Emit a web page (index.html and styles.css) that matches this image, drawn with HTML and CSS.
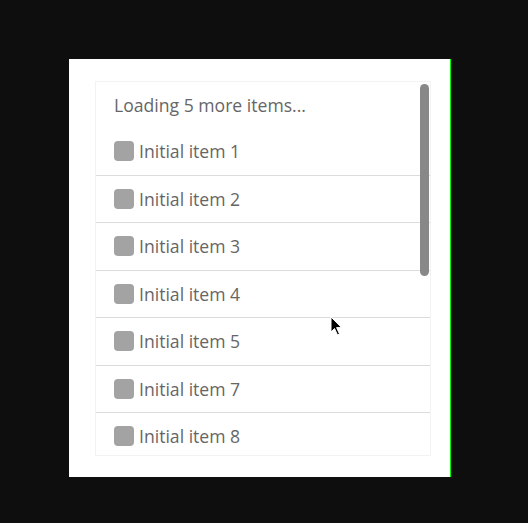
FILE: index.html
```html
<!DOCTYPE html>
<html>
<head>
<meta charset="utf-8">
<link rel="stylesheet" href="styles.css">
</head>
<body>
<div class="panel">
  <div class="list">
    <div class="loading">Loading 5 more items...</div>
    <div class="item"><span class="box"></span><span>Initial item 1</span></div>
    <div class="item"><span class="box"></span><span>Initial item 2</span></div>
    <div class="item"><span class="box"></span><span>Initial item 3</span></div>
    <div class="item"><span class="box"></span><span>Initial item 4</span></div>
    <div class="item"><span class="box"></span><span>Initial item 5</span></div>
    <div class="item"><span class="box"></span><span>Initial item 7</span></div>
    <div class="item last"><span class="box"></span><span>Initial item 8</span></div>
    <div class="thumb"></div>
  </div>
</div>
<svg class="cursor" width="14" height="22" viewBox="0 0 14 22"><path d="M1 1 L1 16 L4.5 12.5 L7.5 19 L9.5 18 L6.6 11.6 L11.5 11.6 Z" fill="#000" stroke="#fff" stroke-width="1"/></svg>
</body>
</html>
```
FILE: styles.css
```css
html, body {
  margin: 0;
  padding: 0;
  background: #0e0e0e;
  height: 100%;
}
body {
  position: relative;
  padding-top: 59px;
  padding-left: 69px;
  box-sizing: border-box;
  font-family: "Open Sans", "Noto Sans", sans-serif;
}
.panel {
  width: 382px;
  height: 418px;
  background: #fff;
  border-right: 1px solid #00ff00;
  padding: 22px 0 0 26px;
  box-sizing: border-box;
}
.list {
  position: relative;
  width: 336px;
  height: 375px;
  box-sizing: border-box;
  border: 1px solid #f3f3f3;
  overflow: hidden;
}
.thumb {
  position: absolute;
  right: 1px;
  top: 2px;
  width: 9px;
  height: 192px;
  background: #888;
  border-radius: 5px;
}
.loading {
  height: 46px;
  display: flex;
  align-items: center;
  padding-left: 18px;
  font-size: 17.6px;
  color: #666;
}
.item {
  height: 47.5px;
  box-sizing: border-box;
  display: flex;
  align-items: center;
  gap: 5px;
  padding-left: 18px;
  font-size: 17.6px;
  color: #666;
  border-bottom: 1px solid #dcdcdc;
}
.item.last {
  border-bottom: none;
  padding-bottom: 1px;
}
.box {
  width: 20px;
  height: 20px;
  border-radius: 4px;
  background: #a3a3a3;
  flex: none;
}
.cursor {
  position: absolute;
  left: 330px;
  top: 316px;
}
```
